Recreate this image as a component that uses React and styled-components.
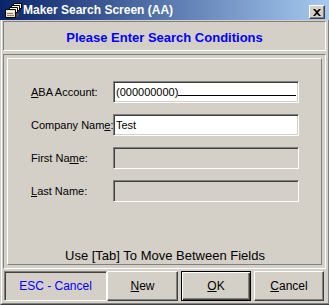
import React from 'react';
import styled, { createGlobalStyle } from 'styled-components';

const Global = createGlobalStyle`
  html, body { margin: 0; padding: 0; background: #D4D0C8; }
  body { font-family: "Liberation Sans", Arial, sans-serif; font-size: 11px; color: #000; }
`;

const Window = styled.div`
  width: 329px;
  height: 305px;
  display: flex;
  flex-direction: column;
  background: #D4D0C8;
  box-sizing: border-box;
`;

const TitleBar = styled.div`
  height: 20px;
  flex: none;
  display: flex;
  align-items: center;
  padding: 0 4px 0 5px;
  background: linear-gradient(to right, #0A246A, #A6CAF0);
  color: #fff;
  font-weight: bold;
  font-size: 12px;
`;

const Caption = styled.span`
  margin-left: 1px;
  flex: 1;
  white-space: nowrap;
`;

const CloseBox = styled.div`
  width: 16px;
  height: 14px;
  box-sizing: border-box;
  align-self: flex-end;
  margin-bottom: 1px;
  background: #D4D0C8;
  border: 1px solid;
  border-color: #fff #404040 #404040 #fff;
  box-shadow: inset -1px -1px #808080;
  display: flex;
  align-items: center;
  justify-content: center;
`;

const Frame = styled.div`
  flex: 1;
  display: flex;
  border-style: solid;
  border-width: 0 1px 1px 1px;
  border-color: #404040 #404040 #404040 #D4D0C8;
`;

const InnerFrame = styled.div`
  flex: 1;
  display: flex;
  flex-direction: column;
  border-style: solid;
  border-width: 0 1px 1px 1px;
  border-color: #808080 #808080 #808080 #fff;
  padding: 1px 2px 2px 1px;
`;

const Header = styled.div`
  height: 30px;
  box-sizing: border-box;
  border: 1px solid;
  border-color: #808080 #fff #fff #808080;
  display: flex;
  align-items: center;
  justify-content: center;
  padding-top: 3px;
  color: #0000FF;
  font-weight: bold;
  font-size: 13px;
`;

const Panel = styled.div`
  margin-top: 3px;
  height: 215px;
  box-sizing: border-box;
  border: 1px solid;
  border-color: #808080 #fff #fff #808080;
  padding: 3px;
  display: flex;
`;

const Group = styled.div`
  flex: 1;
  box-sizing: border-box;
  border: 1px solid;
  border-color: #fff #808080 #808080 #fff;
  padding: 22px 22px 1px 23px;
  display: flex;
  flex-direction: column;
`;

const Form = styled.div`
  display: grid;
  grid-template-columns: 82px 186px;
  grid-auto-rows: 22px;
  row-gap: 11px;
  align-items: center;
`;

const Label = styled.label`
  white-space: nowrap;
  font-size: 11px;
`;

const Field = styled.div`
  height: 22px;
  box-sizing: border-box;
  border: 1px solid;
  border-color: #808080 #fff #fff #808080;
  box-shadow: inset 1px 1px #404040, inset -1px -1px #D4D0C8;
  background: ${p => (p.disabled ? '#D4D0C8' : '#fff')};
  padding: 0 2px;
  display: flex;
  align-items: center;
  font-size: 11px;
`;

const MaskLine = styled.span`
  flex: 1;
  align-self: flex-end;
  margin-bottom: 6px;
  border-bottom: 1px solid #000;
`;

const Hint = styled.div`
  margin-top: auto;
  text-align: center;
  font-size: 13px;
  line-height: 15px;
`;

const ButtonBar = styled.div`
  margin-top: 2px;
  height: 30px;
  display: flex;
  padding: 0 1px;
`;

const EscBox = styled.div`
  width: 103px;
  box-sizing: border-box;
  border: 1px solid;
  border-color: #808080 #fff #fff #808080;
  box-shadow: inset 1px 1px #404040;
  display: flex;
  align-items: center;
  justify-content: center;
  color: #0000FF;
  font-size: 12px;
`;

const Button = styled.div`
  width: ${p => p.w}px;
  margin-left: ${p => p.gap || 0}px;
  box-sizing: border-box;
  border: 1px solid;
  border-color: ${p => (p.primary ? '#000' : '#fff #404040 #404040 #fff')};
  box-shadow: ${p =>
    p.primary
      ? 'inset 1px 1px #fff, inset -1px -1px #404040, inset -2px -2px #808080'
      : 'inset -1px -1px #808080'};
  display: flex;
  align-items: center;
  justify-content: center;
  font-size: 12px;
`;

// stack of index cards, drawn back to front
const CardsIcon = () => (
  <svg width="17" height="15" viewBox="0 0 17 15">
    <polygon points="8.5,0.5 16.5,0.5 16.5,5.5 8.5,5.5" fill="#FFF8D8" stroke="#000" />
    <polygon points="6.5,2.5 14.5,2.5 14.5,7.5 6.5,7.5" fill="#FFF8D8" stroke="#000" />
    <polygon points="4.5,4.5 12.5,4.5 12.5,9.5 4.5,9.5" fill="#FFF8D8" stroke="#000" />
    <polygon points="0.5,6.5 10.5,6.5 10.5,14.5 0.5,14.5" fill="#F0E4B8" stroke="#000" />
    <rect x="2" y="8" width="7" height="1" fill="#fff" />
    <rect x="2" y="10" width="6" height="1" fill="#808080" />
    <rect x="2" y="12" width="7" height="1" fill="#808080" />
    <rect x="11" y="10" width="3" height="4" fill="#404040" />
  </svg>
);

const CloseIcon = () => (
  <svg width="8" height="7" viewBox="0 0 8 7">
    <path d="M0 0h2l2 2 2-2h2L5 3.5 8 7H6L4 5 2 7H0l3-3.5z" fill="#000" />
  </svg>
);

const fields = [
  { label: <><u>A</u>BA Account:</>, value: '(000000000)', mask: true },
  { label: <>Company Nam<u>e</u>:</>, value: 'Test' },
  { label: <>First Na<u>m</u>e:</>, value: '', disabled: true },
  { label: <><u>L</u>ast Name:</>, value: '', disabled: true },
];

export default function App() {
  return (
    <>
      <Global />
      <Window>
        <TitleBar>
          <CardsIcon />
          <Caption>Maker Search Screen (AA)</Caption>
          <CloseBox><CloseIcon /></CloseBox>
        </TitleBar>
        <Frame>
          <InnerFrame>
            <Header>Please Enter Search Conditions</Header>
            <Panel>
              <Group>
                <Form>
                  {fields.map((f, i) => (
                    <React.Fragment key={i}>
                      <Label>{f.label}</Label>
                      <Field disabled={f.disabled}>
                        {f.value}
                        {f.mask && <MaskLine />}
                      </Field>
                    </React.Fragment>
                  ))}
                </Form>
                <Hint>Use [Tab] To Move Between Fields</Hint>
              </Group>
            </Panel>
            <ButtonBar>
              <EscBox>ESC - Cancel</EscBox>
              <Button w={71}><span><u>N</u>ew</span></Button>
              <Button w={70} gap={3} primary><span><u>O</u>K</span></Button>
              <Button w={70} gap={3}><span><u>C</u>ancel</span></Button>
            </ButtonBar>
          </InnerFrame>
        </Frame>
      </Window>
    </>
  );
}
